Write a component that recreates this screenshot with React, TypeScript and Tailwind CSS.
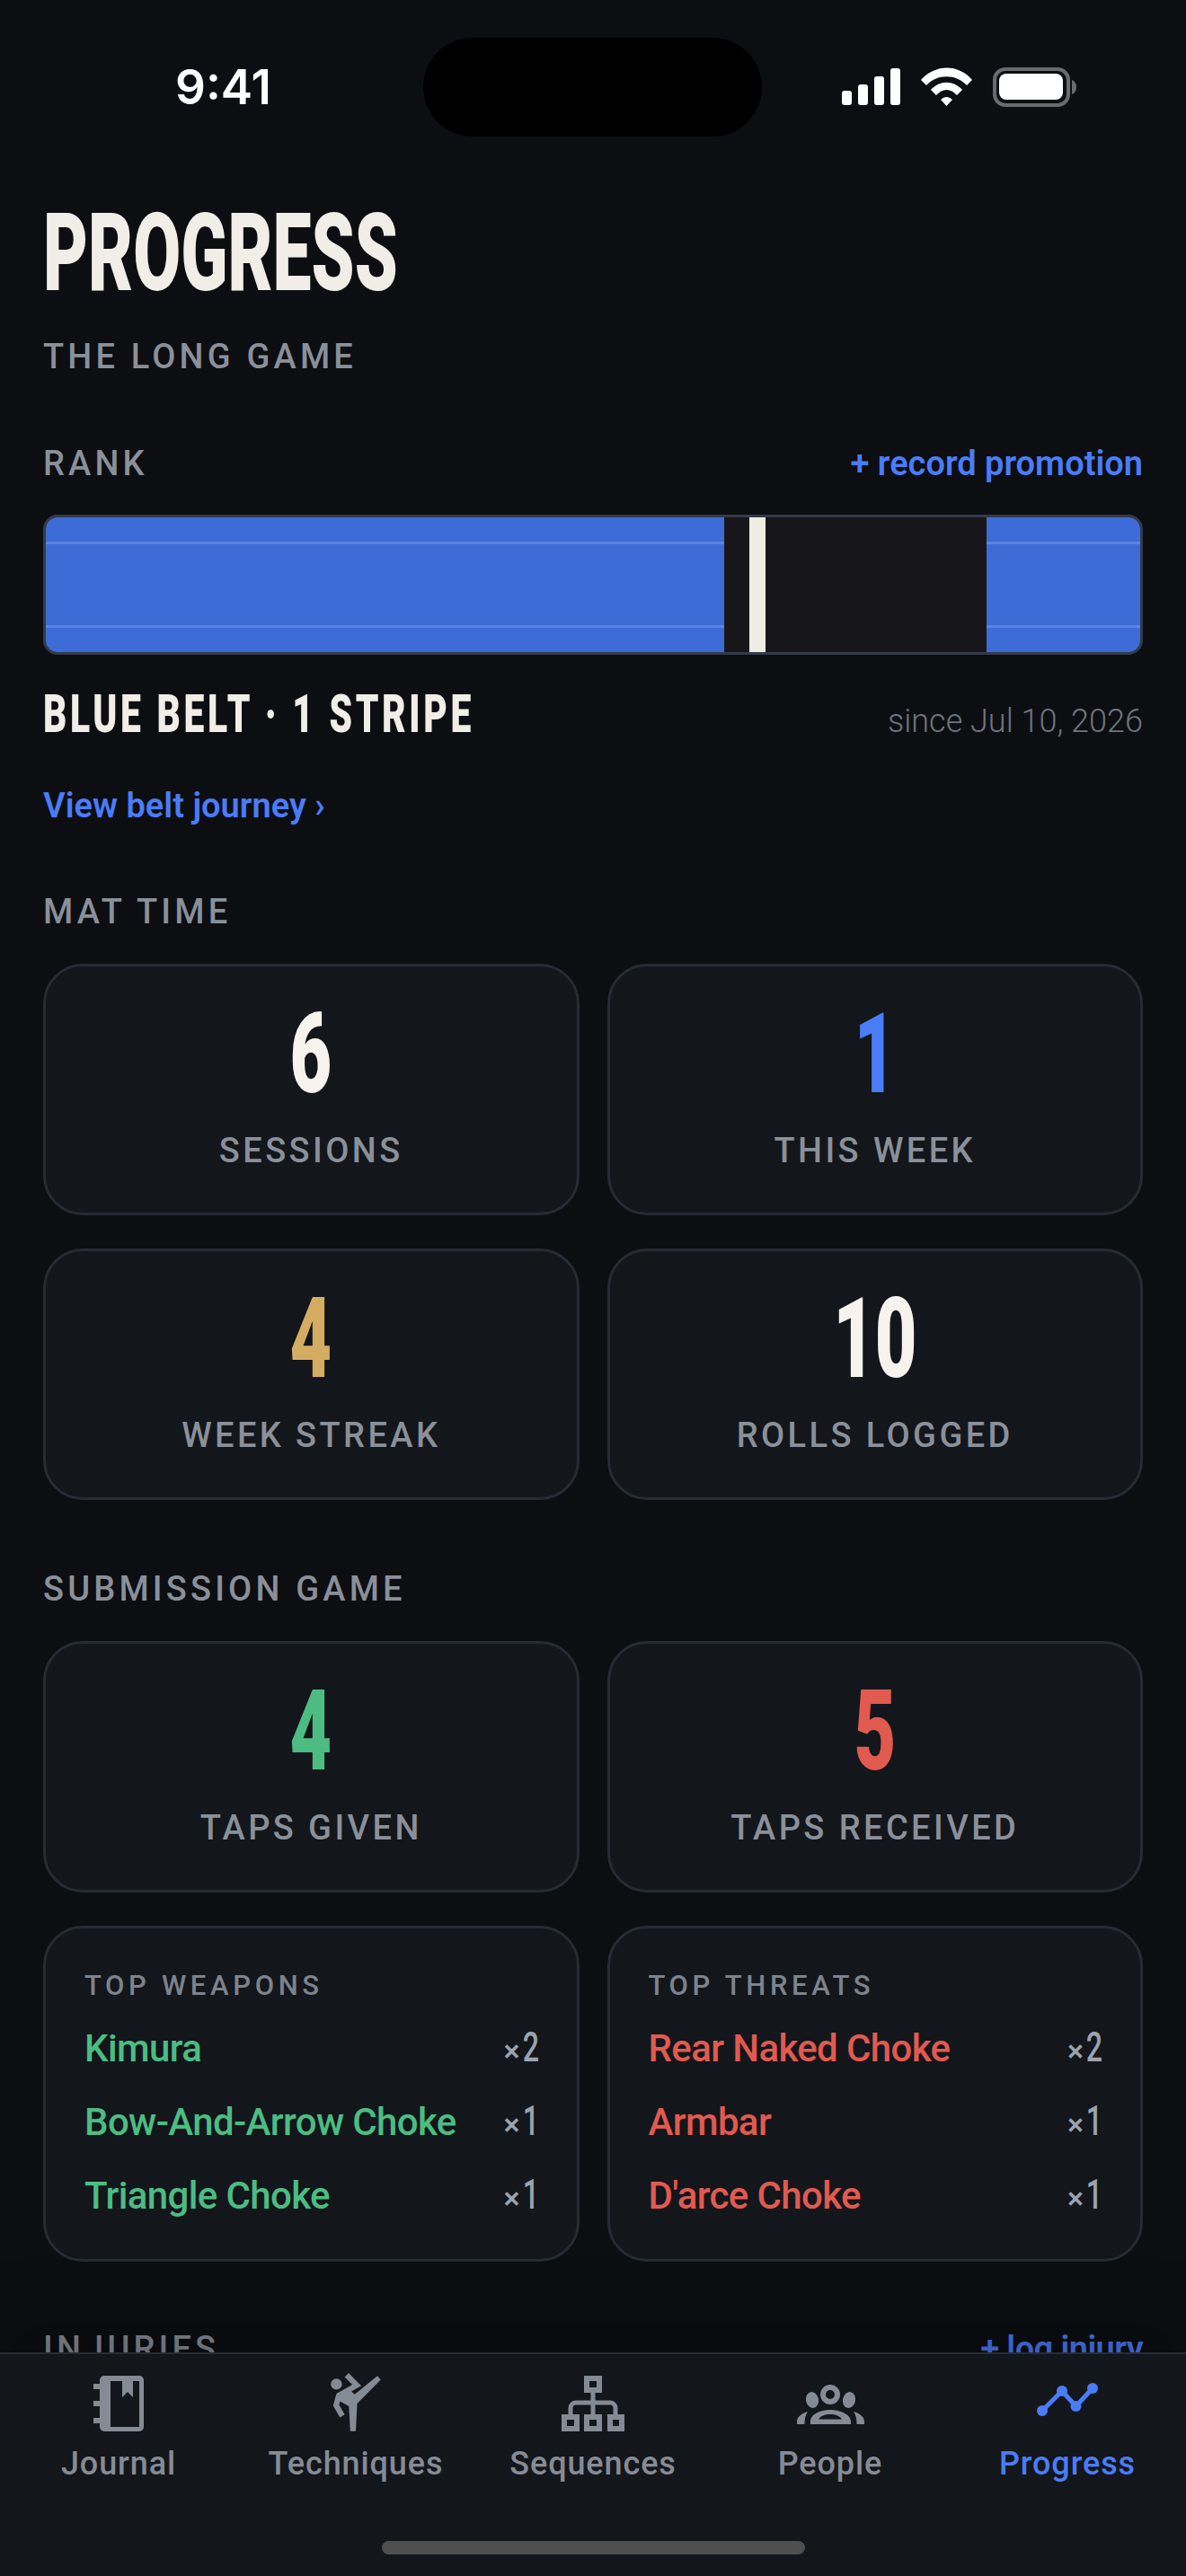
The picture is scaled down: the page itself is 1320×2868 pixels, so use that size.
import { MdSportsMartialArts } from 'react-icons/md';

const display = "font-['Roboto',sans-serif] font-black leading-none";
const body = "font-['Roboto',sans-serif] leading-none";
const sectionLabel = `${body} text-[38px] font-medium tracking-[0.11em] text-[#8a9099]`;
const cardBox = 'rounded-[44px] border-[3px] border-[#262b34] bg-[#13161b]';
const linkText = `${body} text-[38px] font-semibold text-[#4a7cf7]`;

function StatusBar() {
  return (
    <div className="grid grid-cols-[471px_377px_1fr] items-center pt-[42px]">
      <div className={"pl-[195px] font-['Inter',sans-serif] text-[53px] font-semibold leading-none text-white"}>9:41</div>
      <div className="h-[110px] rounded-full bg-black" />
      <svg className="ml-[89px]" width="261" height="44" viewBox="0 0 261 44" fill="#fff">
        <rect x="0" y="26" width="11" height="16" rx="3" />
        <rect x="18" y="19" width="11" height="23" rx="3" />
        <rect x="36" y="10" width="11" height="32" rx="3" />
        <rect x="54" y="1" width="11" height="41" rx="3" />
        <path d="M88 14 C104 -4 130 -4 145 14 L139 20 C127 7 106 7 94 20 Z" />
        <path d="M99 25 C109 14 124 14 134 25 L128 31 C121 23 112 23 105 31 Z" />
        <path d="M110 36 C114 32 119 32 123 36 L116.5 43 Z" />
        <rect x="170" y="2" width="82" height="40" rx="12" fill="none" stroke="#6b6b6b" strokeWidth="4" />
        <rect x="175" y="7" width="71" height="29" rx="8" />
        <path d="M256 14 C259 15 261 18 261 22 C261 26 259 29 256 30 Z" fill="#6b6b6b" />
      </svg>
    </div>
  );
}

function BlueSegment({ className }: { className: string }) {
  return (
    <div className={`flex flex-col bg-[#3e6cd6] pt-[27px] ${className}`}>
      <div className="h-[3px] bg-[#5d83e0]" />
      <div className="mt-[90px] h-[3px] bg-[#5d83e0]" />
    </div>
  );
}

function StatCard({ value, label, color }: { value: string; label: string; color: string }) {
  return (
    <div className={`${cardBox} flex h-[280px] flex-col items-center pt-[36px]`}>
      <div className={`${display} text-[124px] ${color} scale-x-[0.65]`}>{value}</div>
      <div className={`${body} mt-[26px] text-[38px] font-medium tracking-[0.09em] text-[#8a9099]`}>{label}</div>
    </div>
  );
}

function TopList({ title, rows, color }: { title: string; rows: [string, string][]; color: string }) {
  return (
    <div className={`${cardBox} h-[374px] px-[43px] pt-[48px]`}>
      <div className={`${body} text-[31px] font-medium tracking-[0.15em] text-[#7d838d]`}>{title}</div>
      <div className="mt-[30px] flex flex-col gap-[40px]">
        {rows.map(([name, count]) => (
          <div key={name} className="flex h-[42px] items-baseline justify-between">
            <span className={`${body} text-[42px] font-medium tracking-[-0.015em] ${color}`}>{name}</span>
            <span className={`${body} mr-[2px] flex items-baseline font-medium text-[#9aa3ae]`}>
              <span className="text-[34px]">×</span>
              <span className="w-[18px] scale-x-[0.7] text-center text-[46px]">{count}</span>
            </span>
          </div>
        ))}
      </div>
    </div>
  );
}

function JournalIcon() {
  return (
    <svg width="56" height="62" viewBox="0 0 56 62" fill="currentColor">
      <path fillRule="evenodd" d="M7 5a5 5 0 0 1 5-5h39a5 5 0 0 1 5 5v52a5 5 0 0 1-5 5H12a5 5 0 0 1-5-5Zm12 1v51h32V6h-7v18l-6-6-6 6V6Z" />
      <rect x="0" y="9" width="7" height="6" />
      <rect x="0" y="28" width="7" height="6" />
      <rect x="0" y="47" width="7" height="6" />
    </svg>
  );
}

function SequencesIcon() {
  return (
    <svg width="70" height="62" viewBox="0 0 70 62" fill="none" stroke="currentColor" strokeWidth="6">
      <rect x="28" y="3" width="14" height="13" />
      <rect x="3" y="46" width="14" height="13" />
      <rect x="28" y="46" width="14" height="13" />
      <rect x="54" y="46" width="13" height="13" />
      <path d="M35 16v27M10 43V36a6 6 0 0 1 6-6h38a6 6 0 0 1 6 6v7" strokeWidth="5" />
    </svg>
  );
}

function PeopleIcon() {
  return (
    <svg className="mb-[-2px]" width="75" height="44" viewBox="0 0 75 44" fill="currentColor">
      <circle cx="37" cy="11" r="8" fill="none" stroke="currentColor" strokeWidth="6" />
      <ellipse cx="17" cy="17" rx="7" ry="9" transform="rotate(-12 17 17)" />
      <ellipse cx="58" cy="17" rx="7" ry="9" transform="rotate(12 58 17)" />
      <path fillRule="evenodd" d="M15 44V41C15 33 26 28 37 28C48 28 60 33 60 41V44ZM24 38.5H50C48 35 43 33 37 33C31 33 26 35 24 38.5Z" />
      <path d="M0 44V41C0 36 5 32 12 30C9 34 8.5 39 8.5 44Z" />
      <path d="M75 44V41C75 36 70 32 63 30C66 34 66.5 39 66.5 44Z" />
    </svg>
  );
}

function ProgressIcon() {
  return (
    <svg width="70" height="48" viewBox="0 0 70 48" fill="currentColor" stroke="currentColor">
      <path d="M7 32 29 10 44.5 27 63 7" fill="none" strokeWidth="5" strokeLinecap="round" strokeLinejoin="round" />
      <circle cx="7" cy="32" r="6" strokeWidth="0" />
      <circle cx="29" cy="10" r="6" strokeWidth="0" />
      <circle cx="44.5" cy="27" r="6" strokeWidth="0" />
      <circle cx="63" cy="7" r="6" strokeWidth="0" />
    </svg>
  );
}

const tabs = [
  { label: 'Journal', icon: <JournalIcon /> },
  { label: 'Techniques', icon: <MdSportsMartialArts size={74} /> },
  { label: 'Sequences', icon: <SequencesIcon /> },
  { label: 'People', icon: <PeopleIcon /> },
  { label: 'Progress', icon: <ProgressIcon />, active: true },
];

function TabBar() {
  return (
    <div className="relative flex flex-col border-t-[2px] border-[#262b34] bg-[#13161b] pt-[19px] shadow-[0_-40px_60px_rgba(0,0,0,0.25)]">
      <div className="grid grid-cols-5">
        {tabs.map((t) => (
          <div key={t.label} className={`flex flex-col items-center ${t.active ? 'text-[#4a7cf7]' : 'text-[#858b95]'}`}>
            <div className="flex h-[72px] items-center justify-center">{t.icon}</div>
            <div className={`${body} mt-[13px] text-[36px] font-medium tracking-[0.025em]`}>{t.label}</div>
          </div>
        ))}
      </div>
      <div className="mx-auto mb-[24px] mt-[68px] h-[15px] w-[471px] rounded-full bg-[#4f4f4f]" />
    </div>
  );
}

export default function App() {
  return (
    <div className="flex h-[2868px] w-[1320px] flex-col overflow-hidden bg-[#0c0e12]">
      <StatusBar />
      <div className="min-h-0 flex-1 overflow-hidden px-[48px]">
        <h1 className={`${display} mt-[70px] origin-left scale-x-[0.64] text-[120px] text-[#f0eee6]`}>PROGRESS</h1>
        <div className={`${sectionLabel} mt-[36px]`}>THE LONG GAME</div>

        <div className="mt-[81px] flex items-baseline justify-between">
          <span className={sectionLabel}>RANK</span>
          <span className={linkText}>+ record promotion</span>
        </div>

        <div className="mt-[38px] flex h-[156px] overflow-hidden rounded-[16px] border-[3px] border-[#343b47]">
          <BlueSegment className="flex-1" />
          <div className="flex w-[292px] bg-[#17171b] pl-[28px]">
            <div className="w-[18px] bg-[#efece3]" />
          </div>
          <BlueSegment className="w-[171px]" />
        </div>

        <div className="mt-[36px] flex items-baseline justify-between">
          <span className={`${display} origin-left scale-x-[0.68] text-[60px] tracking-[0.09em] text-[#f0eee6]`}>BLUE BELT · 1 STRIPE</span>
          <span className={`${body} text-[36px] font-light text-[#6f757e]`}>since Jul 10, 2026</span>
        </div>

        <div className={`${linkText} mt-[53px]`}>View belt journey ›</div>

        <div className={`${sectionLabel} mt-[80px]`}>MAT TIME</div>
        <div className="mt-[39px] grid grid-cols-2 gap-x-[31px] gap-y-[37px]">
          <StatCard value="6" label="SESSIONS" color="text-[#f5f3ec]" />
          <StatCard value="1" label="THIS WEEK" color="text-[#4a7cf7]" />
          <StatCard value="4" label="WEEK STREAK" color="text-[#d4ad62]" />
          <StatCard value="10" label="ROLLS LOGGED" color="text-[#f5f3ec]" />
        </div>

        <div className={`${sectionLabel} mt-[80px]`}>SUBMISSION GAME</div>
        <div className="mt-[39px] grid grid-cols-2 gap-x-[31px] gap-y-[37px]">
          <StatCard value="4" label="TAPS GIVEN" color="text-[#4cbc82]" />
          <StatCard value="5" label="TAPS RECEIVED" color="text-[#e05a50]" />
          <TopList
            title="TOP WEAPONS"
            color="text-[#4cbc82]"
            rows={[['Kimura', '2'], ['Bow-And-Arrow Choke', '1'], ['Triangle Choke', '1']]}
          />
          <TopList
            title="TOP THREATS"
            color="text-[#e05a50]"
            rows={[['Rear Naked Choke', '2'], ['Armbar', '1'], ["D'arce Choke", '1']]}
          />
        </div>

        <div className="mt-[78px] flex items-baseline justify-between">
          <span className={sectionLabel}>INJURIES</span>
          <span className={`${linkText} tracking-[-0.015em]`}>+ log injury</span>
        </div>
      </div>
      <TabBar />
    </div>
  );
}
